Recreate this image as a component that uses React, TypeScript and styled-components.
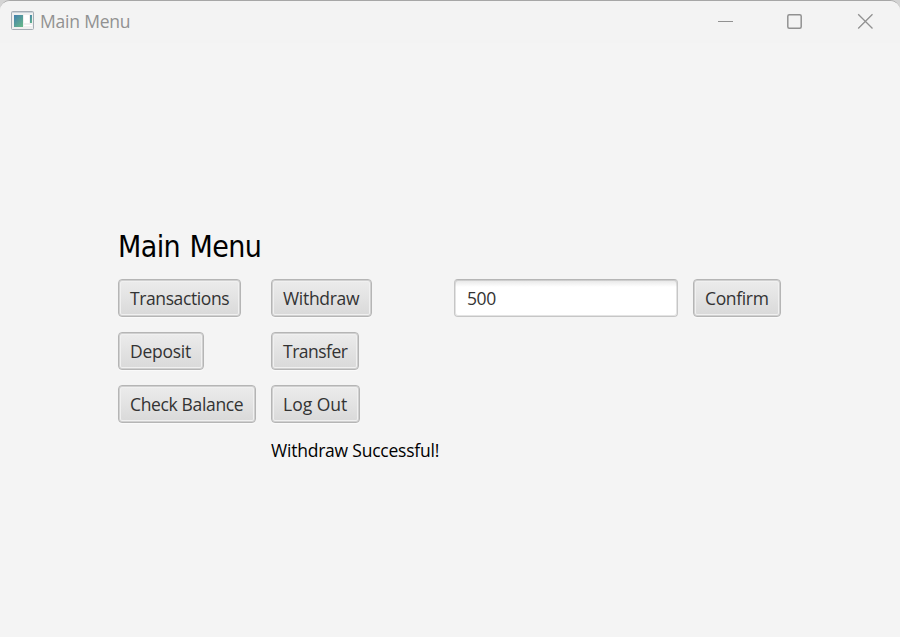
import React from 'react';
import styled, { createGlobalStyle } from 'styled-components';

const GlobalStyle = createGlobalStyle`
  *, *::before, *::after { box-sizing: border-box; }
  html, body { margin: 0; padding: 0; background: #d4d4d4; overflow: hidden; }
`;

const Window = styled.main`
  width: 900px;
  height: 637px;
  overflow: hidden;
  background: #f4f4f4;
  border-top: 1px solid #a6a6a6;
  border-radius: 10px 10px 0 0;
  font-family: 'Open Sans', 'Noto Sans', sans-serif;
`;

const TitleBar = styled.header`
  display: flex;
  align-items: center;
  height: 42px;
  padding-left: 11px;
  background: #f3f3f3;
`;

const AppIcon = styled.svg`
  display: block;
  margin-top: -3px;
`;

const WindowTitle = styled.span`
  flex: 1;
  margin: 0 0 2px 6px;
  color: #919191;
  font-size: 17.5px;
  line-height: 40px;
  letter-spacing: -0.2px;
`;

const WindowControls = styled.div`
  display: flex;
  height: 42px;
`;

const ControlButton = styled.button`
  display: grid;
  place-items: center;
  width: 70px;
  height: 40px;
  padding: 0;
  border: 0;
  background: transparent;
  color: #919191;
`;

const Content = styled.section`
  display: grid;
  grid-template-columns: 138px 168px 224px 88px;
  grid-template-rows: 39px 38px 38px 38px 25px;
  gap: 15px;
  padding: 182px 0 0 118px;
  justify-items: start;
`;

const Heading = styled.h1`
  grid-column: 1 / 3;
  margin: 0;
  color: #000;
  font-family: 'DejaVu Sans Condensed', 'DejaVu Sans', sans-serif;
  font-stretch: condensed;
  font-size: 30px;
  font-weight: 400;
  line-height: 44px;
  letter-spacing: -0.6px;
  word-spacing: 1.5px;
  white-space: nowrap;
`;

const MenuButton = styled.button<{ $width: number; $tracking: number; $column: number }>`
  grid-column: ${(p) => p.$column};
  width: ${(p) => p.$width}px;
  height: 38px;
  padding: 0 0 0 10px;
  border: 1px solid #b5b5b5;
  border-radius: 4px;
  background: linear-gradient(#ececec, #d9d9d9);
  box-shadow: inset 0 0 0 1px #d0d0d0, inset 0 0 0 2px #f0f0f0, 0 1px 0 #fafafa;
  color: #333;
  font-family: inherit;
  font-size: 17.5px;
  line-height: 35px;
  letter-spacing: ${(p) => p.$tracking}px;
  text-align: left;
  text-indent: 1px;
  white-space: nowrap;
`;

const AmountField = styled.input`
  grid-column: 3;
  width: 224px;
  height: 38px;
  padding: 0 12px;
  border: 1px solid #c6c6c6;
  border-top-color: #b5b5b5;
  border-radius: 4px;
  outline: none;
  background: linear-gradient(#e6e6e6, #fff 7px);
  box-shadow: inset 0 0 0 1px rgba(0, 0, 0, 0.11);
  color: #333;
  font-family: inherit;
  font-size: 17.5px;
  letter-spacing: -0.4px;
`;

const Status = styled.p`
  grid-column: 2;
  margin: 0;
  color: #000;
  font-size: 17.5px;
  line-height: 25px;
  letter-spacing: -0.22px;
  white-space: nowrap;
`;

export default function App() {
  return (
    <>
      <GlobalStyle />
      <Window>
        <TitleBar>
          <AppIcon width="23" height="19" viewBox="0 0 23 19">
            <defs>
              <linearGradient id="pane" x1="0" y1="0" x2="0.8" y2="1">
                <stop offset="0" stopColor="#437fae" />
                <stop offset="1" stopColor="#65b58b" />
              </linearGradient>
            </defs>
            <rect x="0.5" y="0.5" width="22" height="18" rx="1" fill="#f0f0f0" stroke="#a5adb5" />
            <path d="M1 1.5H22" stroke="#cbd3da" />
            <rect x="3" y="4" width="9" height="12" fill="url(#pane)" />
            <rect x="13" y="4" width="5" height="8" fill="#ffffff" />
            <rect x="19" y="4" width="2" height="8" fill="url(#pane)" />
            <path d="M13 14.5H21" stroke="#ffffff" />
          </AppIcon>
          <WindowTitle>Main Menu</WindowTitle>
          <WindowControls>
            <ControlButton aria-label="Minimize">
              <svg width="16" height="16" fill="none" stroke="currentColor">
                <path d="M1 8.5H16" />
              </svg>
            </ControlButton>
            <ControlButton aria-label="Maximize">
              <svg width="16" height="16" fill="none" stroke="currentColor">
                <rect x="0.8" y="1.8" width="13.4" height="13.4" rx="1.5" strokeWidth="1.5" />
              </svg>
            </ControlButton>
            <ControlButton aria-label="Close">
              <svg width="16" height="16" fill="none" stroke="currentColor">
                <path d="M1.2 1.2L15.5 15.5M15.5 1.2L1.2 15.5" strokeWidth="1.3" />
              </svg>
            </ControlButton>
          </WindowControls>
        </TitleBar>
        <Content>
          <Heading>Main Menu</Heading>
          <MenuButton $column={1} $width={123} $tracking={-0.4}>Transactions</MenuButton>
          <MenuButton $column={2} $width={101} $tracking={-0.3}>Withdraw</MenuButton>
          <AmountField defaultValue="500" aria-label="Amount" />
          <MenuButton $column={4} $width={88} $tracking={-0.35}>Confirm</MenuButton>
          <MenuButton $column={1} $width={86} $tracking={-0.25}>Deposit</MenuButton>
          <MenuButton $column={2} $width={88} $tracking={-0.5}>Transfer</MenuButton>
          <MenuButton $column={1} $width={138} $tracking={-0.35}>Check Balance</MenuButton>
          <MenuButton $column={2} $width={89} $tracking={0}>Log Out</MenuButton>
          <Status>Withdraw Successful!</Status>
        </Content>
      </Window>
    </>
  );
}
